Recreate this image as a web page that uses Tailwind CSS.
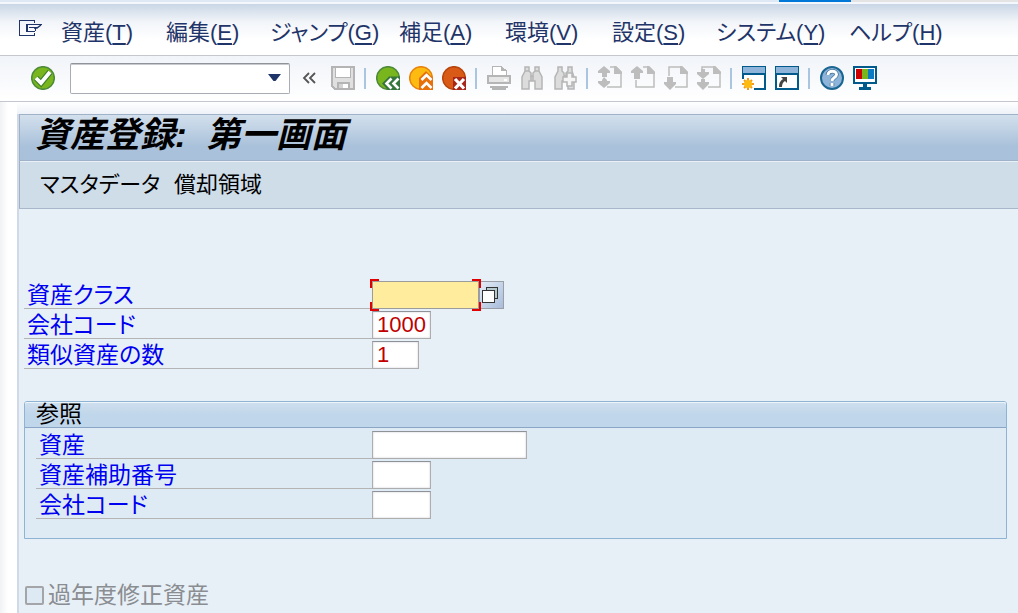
<!DOCTYPE html>
<html lang="ja">
<head>
    <meta charset="UTF-8">
    <meta name="viewport" content="width=device-width, initial-scale=1.0">
    <title>資産登録: 第一画面</title>
    <script src="https://cdn.jsdelivr.net/npm/@tailwindcss/browser@4"></script>
</head>
<body class="min-h-screen flex flex-col bg-white text-[23px] leading-[28px] text-black font-['Liberation_Sans','Noto_Sans_CJK_JP',sans-serif] [font-feature-settings:'palt']">
    <!-- window edge -->
    <div class="flex h-[4px] border-b-2 border-[#f4f7fb] bg-[#dfe8f5]">
        <div class="w-[779px]"></div>
        <div class="w-[72px] bg-[#0078d7]"></div>
        <div class="flex-1 bg-[#e4e4e4]"></div>
    </div>

    <!-- menu bar -->
    <header class="flex h-[52px] items-center border-b border-[#c4c8ce] bg-linear-to-b from-[#c9d6e6] via-[#f2f5f9] via-35% to-white to-70% pl-[19px] pt-[7px] text-[22px] text-[#1f3468]">
        <button type="button" aria-label="メニュー" class="mr-[19px] mb-[9px]">
            <svg class="block h-[17px] w-[23px]" viewBox="0 0 23 17" fill="none" stroke="#1f3468" shape-rendering="crispEdges">
                <path d="M15.500 3V.5H.5v15h15V13"/>
                <path d="M8 4v8" stroke-width="2"/>
                <path d="M7 4.500h15.500M7 11.500h9M10 7.500h8M16.500 8v3"/>
                <path d="M22 5l-4 3h-3" stroke-width="1.500" shape-rendering="auto"/>
            </svg>
        </button>
        <nav class="grid grid-cols-[105px_104px_129px_106px_107px_104px_133px_auto] whitespace-nowrap underline-offset-3">
            <button type="button" class="text-left">資産(<u>T</u>)</button>
            <button type="button" class="text-left">編集(<u>E</u>)</button>
            <button type="button" class="text-left">ジャンプ(<u>G</u>)</button>
            <button type="button" class="text-left">補足(<u>A</u>)</button>
            <button type="button" class="text-left">環境(<u>V</u>)</button>
            <button type="button" class="text-left">設定(<u>S</u>)</button>
            <button type="button" class="text-left">システム(<u>Y</u>)</button>
            <button type="button" class="text-left">ヘルプ(<u>H</u>)</button>
        </nav>
    </header>

    <!-- standard toolbar -->
    <div class="flex h-[46px] items-center gap-[9px] border-b border-[#c4c8ce] bg-linear-to-b from-[#f1f4f9] to-white pb-px pl-[31px]">
        <button type="button" aria-label="確定">
            <svg class="block size-6" viewBox="0 0 24 24">
                <circle cx="12" cy="12" r="11.300" fill="#79b51c" stroke="#4d8a3c" stroke-width="1.500"/>
                <path d="M5 12l5 5 9-11" fill="none" stroke="#3f7d2c" stroke-width="6"/>
                <path d="M5 12l5 5 9-11" fill="none" stroke="#fff" stroke-width="3.800"/>
            </svg>
        </button>
        <div class="relative ml-[6px]">
            <input type="text" aria-label="コマンド" class="block h-[31px] w-[220px] rounded-xs border border-[#a9adb3] border-t-[#8f949b] bg-white px-2 pr-8 shadow-[inset_0_1px_0_#c8cad0] outline-none">
            <button type="button" aria-label="履歴" class="absolute right-[9px] top-[10px]">
                <svg class="block h-[9px] w-[13px]" viewBox="0 0 13 9"><path d="M0 1h13L7.500 8h-2z" fill="#1f3468"/></svg>
            </button>
        </div>
        <button type="button" aria-label="閉じる" class="mx-[3px]">
            <svg class="block h-3 w-[14px]" viewBox="0 0 14 12" fill="none" stroke="#555" stroke-width="1.800"><path d="M7 1L2 6l5 5M13 1L8 6l5 5"/></svg>
        </button>
        <button type="button" aria-label="保存" class="ml-[3px]">
            <svg class="block size-6" viewBox="0 0 24 24" shape-rendering="crispEdges">
                <path d="M1 1h22v22H4l-3-3z" fill="#e0e0e0" stroke="#b4b4b4" stroke-width="2"/>
                <path d="M4.500 1.500h15v10h-15z" fill="#fff" stroke="#b4b4b4"/>
                <path d="M7 17h11v6H7z" fill="#fff" stroke="#b4b4b4" stroke-width="2"/>
                <path d="M8 18h4v4H8z" fill="#d4d4d4"/>
            </svg>
        </button>
        <div class="h-[21px] w-[3px] border-l-2 border-[#a9c5e0]"></div>
        <button type="button" aria-label="戻る">
            <svg class="block size-6" viewBox="0 0 24 24">
                <circle cx="12" cy="12" r="11.300" fill="#79b51c" stroke="#4d8a3c" stroke-width="1.500"/>
                <path d="M6 17.500l7-7h11V24H12z" fill="#35763c"/>
                <path d="M15.500 12.500l-5 5 5 5M22.500 12.500l-5 5 5 5" fill="none" stroke="#fff" stroke-width="2.600"/>
            </svg>
        </button>
        <button type="button" aria-label="終了">
            <svg class="block size-6" viewBox="0 0 24 24">
                <circle cx="12" cy="12" r="11.300" fill="#fdbb12" stroke="#e8830c" stroke-width="1.500"/>
                <path d="M10 12l7-7 7 7v12H10z" fill="#e8700c"/>
                <path d="M12.500 14l5-5 5 5M12.500 22l5-5 5 5" fill="none" stroke="#fff" stroke-width="2.600"/>
            </svg>
        </button>
        <button type="button" aria-label="中止">
            <svg class="block size-6" viewBox="0 0 24 24">
                <circle cx="12" cy="12" r="11.300" fill="#d95a16" stroke="#b8440c" stroke-width="1.500"/>
                <path d="M11 11h13v13H11z" fill="#a8251a"/>
                <path d="M13 13l9 9.500M22 13l-9 9.500" stroke="#fff" stroke-width="3.200"/>
            </svg>
        </button>
        <div class="h-[21px] w-[3px] border-l-2 border-[#a9c5e0]"></div>
        <button type="button" aria-label="印刷">
            <svg class="block size-6" viewBox="0 0 24 24" shape-rendering="crispEdges">
                <path d="M5 9V.5h9l5 4V9" fill="#fff" stroke="#b5b5b5"/>
                <path d="M14 0v5h5z" fill="#b5b5b5"/>
                <path d="M1 10h22v7H1z" fill="#e6e6e6" stroke="#b5b5b5" stroke-width="2"/>
                <path d="M17 13h3v2h-3z" fill="#fff"/>
                <path d="M3 20h18v2h-2v2H5v-2H3z" fill="#b5b5b5"/>
            </svg>
        </button>
        <button type="button" aria-label="検索">
            <svg class="block size-6" viewBox="0 0 24 24" fill="#dcdcdc" stroke="#b5b5b5" stroke-width="1.500">
                <path d="M5 1h4v4l2 2v3h2V7l2-2V1h4v4l3 6v12h-7v-8h-6v8H2V11l3-6z"/>
                <path d="M5 5h4M15 5h4M11 10v5M13 10v5"/>
            </svg>
        </button>
        <button type="button" aria-label="次を検索">
            <svg class="block size-6" viewBox="0 0 24 24" fill="#dcdcdc" stroke="#b5b5b5" stroke-width="1.500">
                <path d="M5 1h4v4l2 2v3h2V7l2-2V1h4v4l2 6v12h-6v-8h-6v8H2V11l3-6z"/>
                <path d="M14 7h5v4h4v5h-4v4h-5v-4h-4v-5h4z" fill="#f5f5f5"/>
            </svg>
        </button>
        <div class="h-[21px] w-[3px] border-l-2 border-[#a9c5e0]"></div>
        <button type="button" aria-label="先頭ページ">
            <svg class="block size-6" viewBox="0 0 24 24" fill="#bdbdbd">
                <path d="M12 1h6l5 5v15H9M18 1v5h5" fill="none" stroke="#bdbdbd" stroke-width="1.500"/>
                <path d="M16 0h2l6 6v2h-8z"/>
                <path d="M6 0l6 5v2H9v4H4V7H0V5zM6 11l3 3v1h3v2l-6 5-6-5v-2h4v-1z"/>
            </svg>
        </button>
        <button type="button" aria-label="前ページ">
            <svg class="block size-6" viewBox="0 0 24 24" fill="#bdbdbd">
                <path d="M12 1h6l5 5v15H5v-7" fill="none" stroke="#bdbdbd" stroke-width="1.500"/>
                <path d="M16 0h2l6 6v2h-8z"/>
                <path d="M6 0l6 5v2H9v6H3V7H0V5z"/>
            </svg>
        </button>
        <button type="button" aria-label="次ページ">
            <svg class="block size-6" viewBox="0 0 24 24" fill="#bdbdbd">
                <path d="M5 10V1h13l5 5v15H11" fill="none" stroke="#bdbdbd" stroke-width="1.500"/>
                <path d="M16 0h2l6 6v2h-8z"/>
                <path d="M3 11h6v5h3v2l-6 6-6-6v-2h3z"/>
            </svg>
        </button>
        <button type="button" aria-label="最終ページ">
            <svg class="block size-6" viewBox="0 0 24 24" fill="#bdbdbd">
                <path d="M5 4V1h13l5 5v15H11" fill="none" stroke="#bdbdbd" stroke-width="1.500"/>
                <path d="M16 0h2l6 6v2h-8z"/>
                <path d="M4 3h4v3h4v2l-6 5-6-5V6h4zM4 13h4v3h4v2l-6 6-6-6v-2h4z"/>
            </svg>
        </button>
        <div class="h-[21px] w-[3px] border-l-2 border-[#a9c5e0]"></div>
        <button type="button" aria-label="新規セッション">
            <svg class="block size-6" viewBox="0 0 24 24" shape-rendering="crispEdges">
                <path d="M1 0h22v24H1z" fill="#fff"/>
                <path d="M0 0h24v24H12v-2h10V9H0z" fill="#005a8c"/>
                <path d="M1 1h22v6H1z" fill="#8fb4d9"/>
                <path d="M0 9h2v4H0z" fill="#005a8c"/>
                <path d="M6 12v12M0 18h12M2 14l8 8M10 14l-8 8" stroke="#f39a1c" stroke-width="2" shape-rendering="auto"/>
                <circle cx="6" cy="18" r="4" fill="#fdbb12" shape-rendering="auto"/>
            </svg>
        </button>
        <button type="button" aria-label="ショートカット">
            <svg class="block size-6" viewBox="0 0 24 24" shape-rendering="crispEdges">
                <path d="M1 1h22v22H1z" fill="#fff" stroke="#005a8c" stroke-width="2"/>
                <path d="M1 1h22v6H1z" fill="#8fb4d9"/>
                <path d="M0 7h24v2H0z" fill="#005a8c"/>
                <path d="M6 11h6v6l-2-2c-2 1-3 3-3 6H4c0-4 1-6 4-8z" fill="#444" shape-rendering="auto"/>
            </svg>
        </button>
        <div class="h-[21px] w-[3px] border-l-2 border-[#a9c5e0]"></div>
        <button type="button" aria-label="ヘルプ">
            <svg class="block size-6" viewBox="0 0 24 24" fill="none">
                <circle cx="12" cy="12" r="11" fill="#8fb4d9" stroke="#1b6592" stroke-width="2"/>
                <path d="M8 9c0-5 8.500-5 8.500-.5 0 3-4.500 3-4.500 6.500M12 17v3" stroke="#3f7396" stroke-width="4.500"/>
                <path d="M8 9c0-5 8.500-5 8.500-.5 0 3-4.500 3-4.500 6.500M12 17v3" stroke="#fff" stroke-width="3"/>
            </svg>
        </button>
        <button type="button" aria-label="レイアウト調整">
            <svg class="block size-6" viewBox="0 0 24 24" shape-rendering="crispEdges">
                <path d="M1 1h22v16H1z" fill="#fff" stroke="#005a8c" stroke-width="2"/>
                <path d="M3 3h6v10H3z" fill="#cc0000"/>
                <path d="M9 3h6v10H9z" fill="#79b51c"/>
                <path d="M15 3h6v10h-6z" fill="#0a7cc4"/>
                <path d="M10 18h4v3h4v3H6v-3h4z" fill="#005a8c"/>
            </svg>
        </button>
    </div>

    <main class="flex flex-1 flex-col bg-linear-to-r from-[#f1f2f4] to-white to-[8px] pl-[17px]">
        <div class="h-[12px] bg-linear-to-b from-white to-[#eef2f8]"></div>
        <div class="flex flex-1 flex-col border-l-2 border-[#d2d9e6] bg-[#e8f0f7]">
            <div class="flex h-[46px] items-center border-t border-l border-[#9fb2c8] bg-linear-to-b from-[#d3e0ed] to-[#a9c1da] to-70% pb-[5px] pl-[15px]">
                <h1 class="text-[35px] leading-[40px] font-bold italic whitespace-pre">資産登録:  第一画面</h1>
            </div>
            <div class="grid h-[49px] grid-cols-[134px_auto] items-center justify-start border-y border-l border-t-[#9fb2c8] border-b-[#a8b8ca] border-l-[#9fb2c8] bg-[#cfdde8] pl-[20px] text-left text-[22px] whitespace-nowrap shadow-[inset_0_1px_0_#e8f0f7]">
                <button type="button" class="text-left">マスタデータ</button>
                <button type="button" class="text-left">償却領域</button>
            </div>

            <form class="pt-[70px] pl-[5px] pr-[11px]">
                <div class="flex h-[30px] items-end">
                    <label for="assetClass" class="w-[348px] border-b border-[#b4b4b4] pt-[2px] pl-[3px] leading-[26px] text-[#0000f0]">資産クラス</label>
                    <div class="relative flex">
                        <input id="assetClass" type="text" class="h-[28px] w-[107px] border border-[#9c9c9c] bg-[#ffec9c] px-1 text-[22px] text-[#c00000] outline-none">
                        <button type="button" aria-label="検索ヘルプ" class="flex h-[28px] w-[25px] items-center justify-start border border-[#9b9ea6] bg-linear-to-br from-[#e4edf7] to-[#a8bcda] pl-[2px]">
                            <svg class="block size-4" viewBox="0 0 16 16" stroke="#333" shape-rendering="crispEdges"><path d="M4.500.5h11v11h-11z" fill="#b4c8d0"/><path d="M.5 3.500h12v12H.5z" fill="#fff"/></svg>
                        </button>
                        <!-- focus corners -->
                        <svg class="pointer-events-none absolute -left-[2px] -top-[2px] h-[32px] w-[111px]" viewBox="0 0 111 32" fill="none" stroke="#e00000" stroke-width="2" shape-rendering="crispEdges">
                            <path d="M9 1H1v8M102 1h8v8M1 23v8h8M102 31h8v-8"/>
                        </svg>
                    </div>
                </div>
                <div class="flex h-[30px] items-end">
                    <label for="company" class="w-[348px] border-b border-[#b4b4b4] pt-[2px] pl-[3px] leading-[26px] text-[#0000f0]">会社コード</label>
                    <input id="company" type="text" value="1000" class="h-[28px] w-[59px] border border-[#adadad] border-t-[#8f9299] bg-white px-1 text-[22px] text-[#c00000] shadow-[inset_0_0_2px_#c4c4cc] outline-none">
                </div>
                <div class="flex h-[30px] items-end">
                    <label for="similar" class="w-[348px] border-b border-[#b4b4b4] pt-[2px] pl-[3px] leading-[26px] text-[#0000f0]">類似資産の数</label>
                    <input id="similar" type="text" value="1" class="h-[28px] w-[47px] border border-[#adadad] border-t-[#8f9299] bg-white px-1 text-[22px] text-[#c00000] shadow-[inset_0_0_2px_#c4c4cc] outline-none">
                </div>

                <section class="mt-[32px] h-[138px] rounded-t-[3px] border border-[#8fb3d3] bg-[#deebf4]">
                    <h2 class="h-[26px] rounded-t-[2px] border-b border-[#8aa5c6] bg-linear-to-b from-[#cfdfee] to-[#c0d6ea] to-50% pl-[11px] leading-[24px] shadow-[inset_0_1px_0_#edf4fa]">参照</h2>
                    <div class="pt-[1px] pl-[11px]">
                        <div class="flex h-[30px] items-end">
                            <label for="refAsset" class="w-[336px] border-b border-[#b4b4b4] pt-[2px] pl-[3px] leading-[26px] text-[#0000f0]">資産</label>
                            <input id="refAsset" type="text" class="h-[28px] w-[155px] border border-[#adadad] border-t-[#8f9299] bg-white px-1 text-[22px] text-[#c00000] shadow-[inset_0_0_2px_#c4c4cc] outline-none">
                        </div>
                        <div class="flex h-[30px] items-end">
                            <label for="refSub" class="w-[336px] border-b border-[#b4b4b4] pt-[2px] pl-[3px] leading-[26px] text-[#0000f0]">資産補助番号</label>
                            <input id="refSub" type="text" class="h-[28px] w-[59px] border border-[#adadad] border-t-[#8f9299] bg-white px-1 text-[22px] text-[#c00000] shadow-[inset_0_0_2px_#c4c4cc] outline-none">
                        </div>
                        <div class="flex h-[30px] items-end">
                            <label for="refCompany" class="w-[336px] border-b border-[#b4b4b4] pt-[2px] pl-[3px] leading-[26px] text-[#0000f0]">会社コード</label>
                            <input id="refCompany" type="text" class="h-[28px] w-[59px] border border-[#adadad] border-t-[#8f9299] bg-white px-1 text-[22px] text-[#c00000] shadow-[inset_0_0_2px_#c4c4cc] outline-none">
                        </div>
                    </div>
                </section>

                <div class="mt-[42px] flex items-center gap-[4px] pl-[1px] text-[#8a8d91]">
                    <input id="prior" type="checkbox" disabled class="size-[19px] appearance-none rounded-xs border-2 border-[#a3a5a8] bg-[#dde9f3]">
                    <label for="prior">過年度修正資産</label>
                </div>
            </form>
        </div>
    </main>
</body>
</html>
